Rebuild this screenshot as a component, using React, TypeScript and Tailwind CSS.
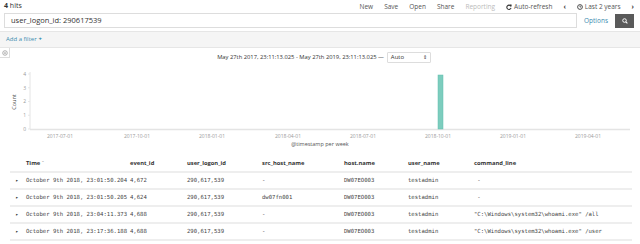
import React from 'react';

const rows = [
  { time: 'October 9th 2018, 23:01:50.204', event: '4,672', logon: '290,617,539', src: '-', host: 'DW07EO003', user: 'testadmin', cmd: ' -' },
  { time: 'October 9th 2018, 23:01:50.205', event: '4,624', logon: '290,617,539', src: 'dw07fn001', host: 'DW07EO003', user: 'testadmin', cmd: ' -' },
  { time: 'October 9th 2018, 23:04:11.373', event: '4,688', logon: '290,617,539', src: '-', host: 'DW07EO003', user: 'testadmin', cmd: '"C:\\Windows\\system32\\whoami.exe" /all' },
  { time: 'October 9th 2018, 23:17:36.188', event: '4,688', logon: '290,617,539', src: '-', host: 'DW07EO003', user: 'testadmin', cmd: '"C:\\Windows\\system32\\whoami.exe" /user' },
];

const xLabels = [
  ['2017-07-01', 60],
  ['2017-10-01', 137],
  ['2018-01-01', 212],
  ['2018-04-01', 288],
  ['2018-07-01', 363],
  ['2018-10-01', 438],
  ['2019-01-01', 513],
  ['2019-04-01', 588],
] as const;

const Chart = () => (
  <svg width="640" height="84" className="block">
    <g fontFamily="'Open Sans', sans-serif" fontSize="5" fill="#999">
      {[4, 3, 2, 1, 0].map((n, i) => (
        <g key={n}>
          <text x="26" y={8 + i * 13.75 + 1.8} textAnchor="end">{n}</text>
          <line x1="28" x2="30" y1={8 + i * 13.75} y2={8 + i * 13.75} stroke="#ddd" strokeWidth="0.7" />
        </g>
      ))}
      <text x="16" y="36" transform="rotate(-90 16 36)" textAnchor="middle" fontSize="5.5" fill="#555">Count</text>
      {xLabels.map(([l, x]) => (
        <text key={l} x={x} y="72" textAnchor="middle">{l}</text>
      ))}
      <text x="320" y="80" textAnchor="middle" fontSize="5.5" fill="#555">@timestamp per week</text>
    </g>
    <line x1="30" x2="30" y1="6" y2="63" stroke="#e4e4e4" strokeWidth="1" />
    <line x1="30" x2="630" y1="63.5" y2="63.5" stroke="#e4e4e4" strokeWidth="1.5" />
    <rect x="438" y="9" width="5" height="54" fill="#7dcdbe" stroke="#5fbfae" strokeWidth="0.5" />
  </svg>
);

export default function App() {
  return (
    <div className="w-[640px] h-[244px] overflow-hidden bg-white text-[#333]" style={{ fontFamily: "'Open Sans', sans-serif" }}>
      <div className="flex items-center justify-between h-[13px] pl-[4px] pr-[6px] text-[6.5px]">
        <div className="text-[7px]"><span className="font-bold">4</span> hits</div>
        <div className="flex items-center gap-[11px] text-[#555]">
          <span>New</span>
          <span>Save</span>
          <span>Open</span>
          <span>Share</span>
          <span className="text-[#bbb]">Reporting</span>
          <span className="flex items-center gap-[2px]">
            <svg width="6" height="6" viewBox="0 0 10 10"><path d="M8 3.5A3.6 3.6 0 1 0 8.4 6.5" fill="none" stroke="#333" strokeWidth="1.8" /><path d="M6.5 0.8L9.3 1v3L6.5 3.8z" fill="#333" /></svg>
            Auto-refresh
          </span>
          <span className="font-bold text-[#333]">‹</span>
          <span className="flex items-center gap-[2px]">
            <svg width="6" height="6" viewBox="0 0 10 10"><circle cx="5" cy="5" r="4" fill="none" stroke="#333" strokeWidth="1.4" /><path d="M5 2.5V5h2" fill="none" stroke="#333" strokeWidth="1.2" /></svg>
            Last 2 years
          </span>
          <span className="font-bold text-[#333]">›</span>
        </div>
      </div>
      <div className="flex items-center h-[15px] pl-[4px] pr-[6px]">
        <div className="flex-1 h-[15px] border border-[#ddd] flex items-center pl-[6px] text-[7.5px] text-[#333]">
          user_logon_id: 290617539
        </div>
        <span className="px-[7px] text-[6.5px] text-[#3b8cb0]">Options</span>
        <div className="w-[19px] h-[14px] bg-[#5a5a5a] flex items-center justify-center">
          <svg width="6" height="6" viewBox="0 0 10 10"><circle cx="4.2" cy="4.2" r="3" fill="none" stroke="#fff" strokeWidth="1.6" /><path d="M6.4 6.4L9 9" stroke="#fff" strokeWidth="1.8" /></svg>
        </div>
      </div>
      <div className="mt-[3px] h-[17px] bg-[#f5f5f5] border-y border-[#e6e6e6] flex items-center pl-[6px] text-[6px] text-[#3b8cb0]">
        Add a filter <span className="ml-[2px] font-bold text-[#2a7fa5]">+</span>
      </div>
      <div className="relative h-[18px]">
        <div className="absolute left-0 top-0 w-[10px] h-[10px] border-r border-b border-[#ddd] flex items-center justify-center">
          <svg width="6" height="6" viewBox="0 0 10 10"><circle cx="5" cy="5" r="3.8" fill="none" stroke="#999" strokeWidth="1.3" /><circle cx="5" cy="5" r="1.4" fill="#999" /></svg>
        </div>
        <div className="flex items-center justify-center h-full gap-[3px] text-[5.8px] text-[#333] pl-[8px]">
          <span>May 27th 2017, 23:11:13.025 - May 27th 2019, 23:11:13.025 —</span>
          <div className="w-[44px] h-[11px] border border-[#ddd] rounded-[1px] flex items-center justify-between px-[3px] text-[6px]">
            <span>Auto</span>
            <span className="text-[5px] leading-none">⇕</span>
          </div>
        </div>
      </div>
      <Chart />
      <table className="ml-[10px] w-[622px] table-fixed border-collapse mt-[5px]">
        <colgroup>
          <col className="w-[14px]" />
          <col className="w-[104px]" />
          <col className="w-[57px]" />
          <col className="w-[75px]" />
          <col className="w-[82px]" />
          <col className="w-[64px]" />
          <col className="w-[66px]" />
          <col />
        </colgroup>
        <thead>
          <tr className="h-[17px] border-b-2 border-[#eee] text-[5.8px] font-bold text-[#333] text-left">
            <th></th>
            <th className="pl-[2px]">Time <span className="font-normal text-[#aaa]">ˆ</span></th>
            <th className="pl-[2px]">event_id</th>
            <th className="pl-[2px]">user_logon_id</th>
            <th className="pl-[2px]">src_host_name</th>
            <th className="pl-[2px]">host.name</th>
            <th className="pl-[2px]">user_name</th>
            <th className="pl-[2px]">command_line</th>
          </tr>
        </thead>
        <tbody style={{ fontFamily: "'DejaVu Sans Mono', monospace" }} className="text-[5.6px] text-[#444]">
          {rows.map((r) => (
            <tr key={r.time} className="h-[17px] border-b-2 border-[#eee]">
              <td className="text-center text-[5px] text-[#333]">▸</td>
              <td className="pl-[2px] whitespace-pre">{r.time}</td>
              <td className="pl-[2px]">{r.event}</td>
              <td className="pl-[2px]">{r.logon}</td>
              <td className="pl-[2px]">{r.src}</td>
              <td className="pl-[2px]">{r.host}</td>
              <td className="pl-[2px]">{r.user}</td>
              <td className="pl-[2px] whitespace-pre">{r.cmd}</td>
            </tr>
          ))}
        </tbody>
      </table>
    </div>
  );
}
